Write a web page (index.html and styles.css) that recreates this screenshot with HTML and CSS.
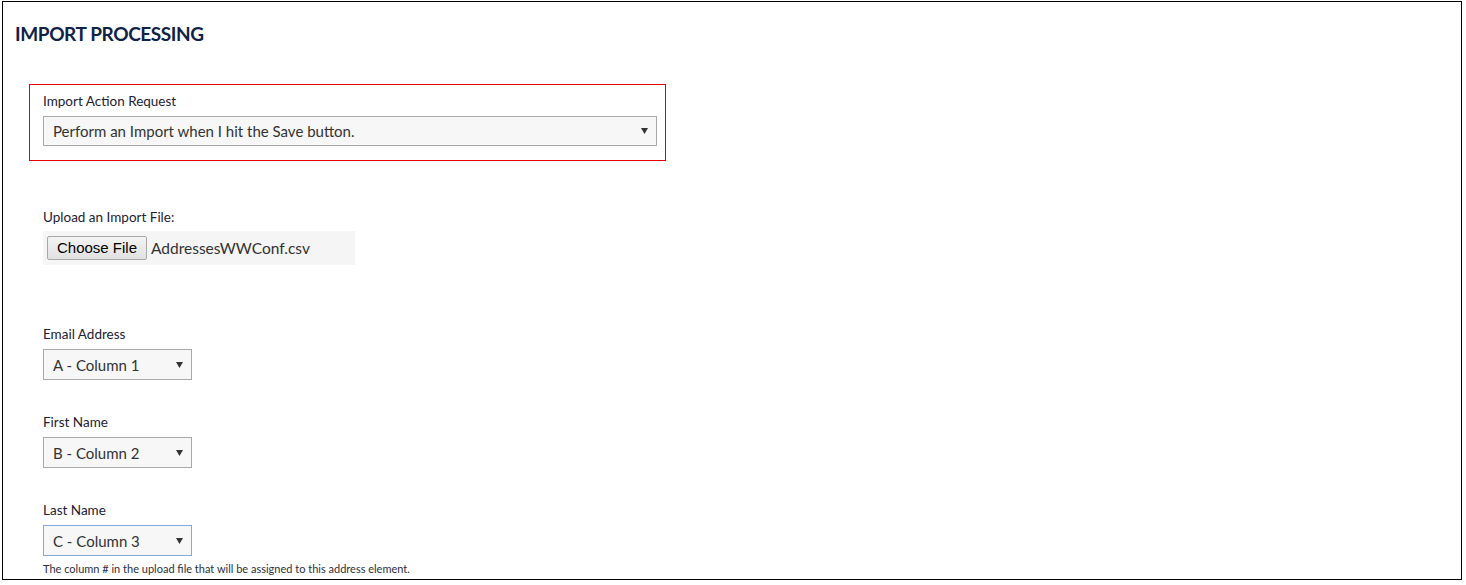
FILE: index.html
```html
<!DOCTYPE html>
<html lang="en">
<head>
    <meta charset="UTF-8">
    <title>Import Processing</title>
    <link rel="stylesheet" href="styles.css">
</head>
<body>

    <div class="frame">
        <h1 class="title">IMPORT PROCESSING</h1>

        <div class="action-box">
            <div class="field-label">Import Action Request</div>
            <div class="select select-wide">
                <span class="select-text">Perform an Import when I hit the Save button.</span>
                <svg class="caret" width="7" height="6" viewBox="0 0 7 6"><path d="M0 0H7L3.5 6Z" fill="#333"/></svg>
            </div>
        </div>

        <div class="field upload">
            <div class="field-label">Upload an Import File:</div>
            <div class="file-input">
                <span class="file-btn">Choose File</span>
                <span class="file-name">AddressesWWConf.csv</span>
            </div>
        </div>

        <div class="field first">
            <div class="field-label">Email Address</div>
            <div class="select select-small">
                <span class="select-text">A - Column 1</span>
                <svg class="caret" width="7" height="6" viewBox="0 0 7 6"><path d="M0 0H7L3.5 6Z" fill="#333"/></svg>
            </div>
        </div>

        <div class="field">
            <div class="field-label">First Name</div>
            <div class="select select-small">
                <span class="select-text">B - Column 2</span>
                <svg class="caret" width="7" height="6" viewBox="0 0 7 6"><path d="M0 0H7L3.5 6Z" fill="#333"/></svg>
            </div>
        </div>

        <div class="field">
            <div class="field-label">Last Name</div>
            <div class="select select-small focused">
                <span class="select-text">C - Column 3</span>
                <svg class="caret" width="7" height="6" viewBox="0 0 7 6"><path d="M0 0H7L3.5 6Z" fill="#333"/></svg>
            </div>
            <div class="help-text">The column # in the upload file that will be assigned to this address element.</div>
        </div>
    </div>

</body>
</html>
```

FILE: styles.css
```css
body {
    margin: 0;
    background: #fff;
    font-family: Lato, "Open Sans", sans-serif;
    color: #1c2133;
}
.frame {
    box-sizing: border-box;
    width: 1460px;
    height: 579px;
    margin: 1px 0 0 2px;
    border: 1px solid #000;
    padding: 0 12px;
    overflow: hidden;
}
.title {
    margin: 20px 0 0;
    font-size: 19px;
    line-height: 24px;
    font-weight: 700;
    letter-spacing: -0.4px;
    color: #102347;
}
.field-label {
    font-size: 13.5px;
    line-height: 18px;
    margin-bottom: 6px;
}
.action-box {
    width: 637px;
    box-sizing: border-box;
    margin: 38px 0 0 14px;
    border: 1px solid #e60000;
    padding: 7px 8px 14px 13px;
}
.select {
    box-sizing: border-box;
    height: 30px;
    display: flex;
    align-items: center;
    background: #f7f7f7;
    border: 1px solid #a9a9a9;
    padding: 0 8px 0 9px;
    font-size: 15px;
    color: #333;
}
.select-wide {
    width: 614px;
}
.select-small {
    width: 149px;
    height: 31px;
}
.select.focused {
    border-color: #86a8db;
}
.select-text {
    flex: 1;
}
.field {
    margin: 33px 0 0 28px;
}
.field.upload {
    margin-top: 47px;
}
.field.upload .field-label {
    margin-bottom: 5px;
}
.field.first {
    margin-top: 60px;
}
.file-input {
    box-sizing: border-box;
    width: 312px;
    height: 34px;
    background: #f5f5f5;
    display: flex;
    align-items: center;
    padding-left: 4px;
}
.file-btn {
    box-sizing: border-box;
    width: 100px;
    height: 24px;
    line-height: 22px;
    text-align: center;
    font-family: "Liberation Sans", Arial, sans-serif;
    font-size: 15px;
    color: #000;
    background: linear-gradient(#f3f3f3, #e1e1e1);
    border: 1px solid #a8a8a8;
    border-radius: 2px;
}
.file-name {
    margin-left: 4px;
    font-size: 15.5px;
    color: #333;
}
.help-text {
    margin-top: 6px;
    font-size: 11px;
    line-height: 14px;
    color: #2a2f40;
}
```
